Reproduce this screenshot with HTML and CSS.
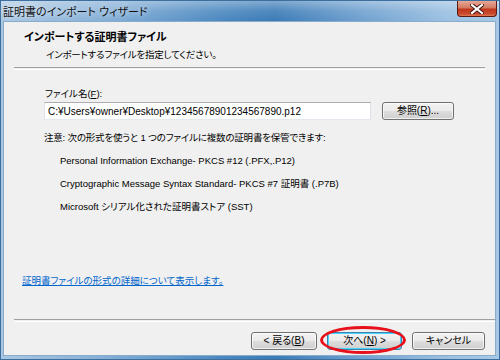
FILE: index.html
```html
<!DOCTYPE html>
<html lang="ja">
<head>
  <meta charset="UTF-8">
  <title>証明書のインポート ウィザード</title>
  <link rel="stylesheet" href="styles.css">
</head>
<body>
  <div class="window">
    <div class="titlebar">
      <span class="title">証明書のインポート ウィザード</span>
      <div class="close-btn">
        <svg width="14" height="10" viewBox="0 0 14 10">
          <path d="M2 1 L12 9 M12 1 L2 9" stroke="#3a1010" stroke-width="4" stroke-linecap="square"/>
          <path d="M2 1 L12 9 M12 1 L2 9" stroke="#fff" stroke-width="2.2" stroke-linecap="square"/>
        </svg>
      </div>
    </div>

    <div class="client">
      <div class="header">
        <div class="header-title">インポートする証明書ファイル</div>
        <div class="header-sub">インポートするファイルを指定してください。</div>
      </div>
      <div class="sep sep-top"></div>

      <div class="page">
        <label class="field-label">ファイル名(<u>F</u>):</label>
        <div class="file-row">
          <div class="textbox">C:¥Users¥owner¥Desktop¥12345678901234567890.p12</div>
          <div class="btn btn-browse">参照(<u>R</u>)...</div>
        </div>
        <div class="note">注意: 次の形式を使うと 1 つのファイルに複数の証明書を保管できます:</div>
        <ul class="formats">
          <li>Personal Information Exchange- PKCS #12 (.PFX,.P12)</li>
          <li>Cryptographic Message Syntax Standard- PKCS #7 証明書 (.P7B)</li>
          <li>Microsoft シリアル化された証明書ストア (SST)</li>
        </ul>
        <a class="more-link" href="#">証明書ファイルの形式の詳細について表示します。</a>
      </div>

      <div class="sep sep-bottom"></div>
      <div class="buttons">
        <div class="btn btn-back">&lt; 戻る(<u>B</u>)</div>
        <div class="btn btn-next">次へ(<u>N</u>) &gt;
          <div class="highlight"></div>
        </div>
        <div class="btn btn-cancel">キャンセル</div>
      </div>
    </div>
  </div>
</body>
</html>
```

FILE: styles.css
```css
html, body {
  margin: 0;
  padding: 0;
  background: #ffffff;
}

body {
  font-family: "Liberation Sans", "Noto Sans CJK JP", sans-serif;
  font-size: 10px;
  font-feature-settings: "palt" on;
  color: #000;
}

.window {
  width: 500px;
  height: 360px;
  display: flex;
  flex-direction: column;
  box-sizing: border-box;
  border: 1px solid #3c6f9e;
  background: linear-gradient(to right, #a9c6e2 0%, #86b0d8 20%, #4a87bf 45%, #3b7bb6 55%, #6fa0cf 72%, #9cc1e2 90%, #a6c8e6 100%);
}

.titlebar {
  height: 20px;
  display: flex;
  align-items: center;
  justify-content: space-between;
  background: linear-gradient(to bottom, rgba(255,255,255,0.35) 0%, rgba(255,255,255,0.1) 50%, rgba(255,255,255,0) 100%);
}

.title {
  padding-left: 2px;
  font-size: 11px;
  color: #111;
  text-shadow: 0 0 6px rgba(255,255,255,0.9);
}

.close-btn {
  align-self: flex-start;
  width: 40px;
  height: 16px;
  margin-right: 2px;
  box-sizing: border-box;
  border: 1px solid #5a1b14;
  border-top: none;
  border-radius: 0 0 4px 4px;
  background: linear-gradient(to bottom, #e6a895 0%, #d47a63 45%, #c2371c 55%, #c84a2c 85%, #e07a55 100%);
  display: flex;
  align-items: center;
  justify-content: center;
}

.client {
  flex: 1;
  margin: 0 3px 3px 2px;
  background: #f0f0f0;
  border: 1px solid #8aaccb;
  display: flex;
  flex-direction: column;
}

.header {
  padding: 8px 0 5px 20px;
}

.header-title {
  font-weight: bold;
  font-size: 11px;
  line-height: 14px;
}

.header-sub {
  padding-left: 22px;
  margin-top: 4px;
  line-height: 14px;
  font-size: 9.5px;
  letter-spacing: -0.2px;
}

.sep {
  height: 1px;
  border-top: 1px solid #a0a0a0;
  border-bottom: 1px solid #ffffff;
}

.sep-top {
  margin: 0 10px 0 10px;
}

.page {
  flex: 1;
  display: flex;
  flex-direction: column;
  align-items: flex-start;
  padding: 17px 20px 0 40px;
  font-size: 9.5px;
}

.field-label {
  height: 14px;
  line-height: 14px;
  margin-left: 1px;
}

.file-row {
  display: flex;
  align-items: center;
  gap: 11px;
  margin-top: 1px;
}

.textbox {
  width: 327px;
  height: 18px;
  box-sizing: border-box;
  background: #fff;
  border: 1px solid #abadb3;
  border-left-color: #e2e3ea;
  border-right-color: #dbdfe6;
  border-bottom-color: #e3e9ef;
  padding: 2px 3px;
  line-height: 13px;
  font-size: 10px;
  white-space: nowrap;
}

.btn {
  position: relative;
  height: 18px;
  box-sizing: border-box;
  border: 1px solid #707070;
  border-radius: 3px;
  background: linear-gradient(to bottom, #f2f2f2 0%, #ebebeb 48%, #dddddd 52%, #cfcfcf 100%);
  box-shadow: inset 0 0 0 1px rgba(255,255,255,0.7);
  display: flex;
  align-items: center;
  justify-content: center;
  line-height: 14px;
  font-size: 10px;
}

.btn-browse {
  width: 72px;
}

.note {
  margin-top: 11px;
  height: 14px;
  line-height: 14px;
  letter-spacing: -0.2px;
}

.formats {
  list-style: none;
  margin: 9px 0 0 0;
  padding: 0 0 0 16px;
}

.formats li {
  height: 14px;
  line-height: 14px;
  margin-bottom: 9px;
}

.formats li:last-child {
  margin-bottom: 0;
}

.more-link {
  margin-top: 60px;
  margin-left: -22px;
  height: 14px;
  color: #0066cc;
  text-decoration: underline;
  line-height: 14px;
}

.sep-bottom {
  margin: 0 0 0 10px;
}

.buttons {
  display: flex;
  justify-content: flex-end;
  gap: 10px;
  padding: 10px 10px 5px 0;
}

.btn-back {
  width: 66px;
}

.btn-next {
  width: 75px;
  border-color: #3c7fb1;
  box-shadow: inset 0 0 0 1px #48d4fb;
}

.btn-cancel {
  width: 73px;
}

.highlight {
  position: absolute;
  left: -8px;
  top: -7px;
  width: 80px;
  height: 22px;
  border: 3px solid #e8101a;
  border-radius: 50%;
  pointer-events: none;
}
```
